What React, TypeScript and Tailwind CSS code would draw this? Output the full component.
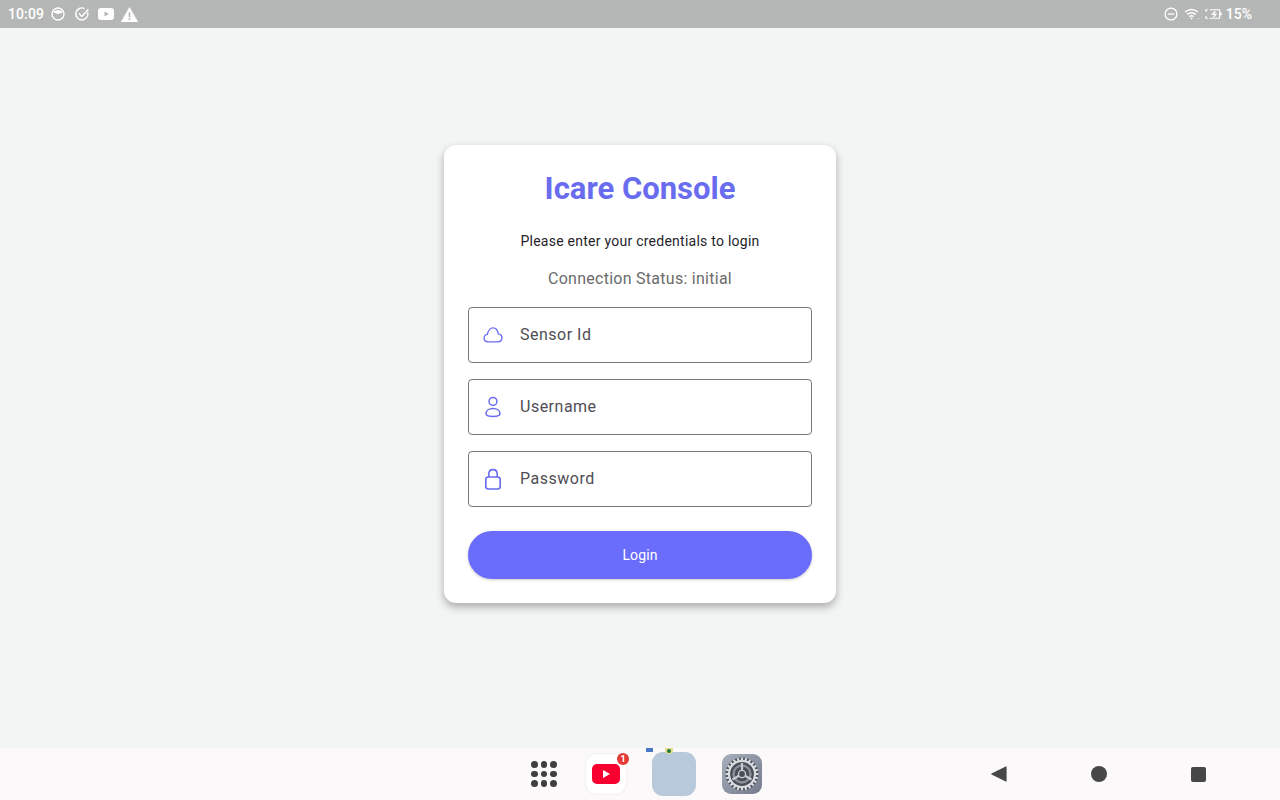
import type { ReactNode } from "react";

function StatusBar() {
  return (
    <div className="flex h-7 shrink-0 items-center justify-between bg-[#b5b7b6] pl-2 pr-7 text-white">
      <div className="flex items-center">
        <span className="text-[14px] font-medium leading-none tracking-[0.1px]">10:09</span>
        <svg viewBox="0 0 16 16" className="ml-[6px] h-4 w-4" fill="none" stroke="currentColor" strokeWidth="1.4">
          <circle cx="8" cy="8" r="6" />
          <path d="M3.5 5.5 Q8 2.5 12.5 5.5 Q12 8 10.5 7 L8 8.2 L5.5 7 Q4 8 3.5 5.5Z" fill="currentColor" stroke="none" />
        </svg>
        <svg viewBox="0 0 16 16" className="ml-[8px] h-4 w-4" fill="none" stroke="currentColor" strokeWidth="1.4">
          <path d="M13.6 6.2 A6 6 0 1 1 10.6 2.6" />
          <path d="M5 7.6 L7.8 10.4 L14.4 3.2" />
        </svg>
        <svg viewBox="0 0 16 12" className="ml-[8px] h-[12px] w-4">
          <rect width="16" height="12" rx="3" fill="currentColor" />
          <path d="M6.5 3.5 L11 6 L6.5 8.5Z" fill="#b5b7b6" />
        </svg>
        <svg viewBox="0 0 16 14" className="ml-[7px] h-[15px] w-[17px]">
          <path d="M8 0.5 L15.8 14 H0.2Z" fill="currentColor" stroke="currentColor" strokeWidth="0.6" strokeLinejoin="round" />
          <rect x="7.2" y="5" width="1.6" height="4.6" fill="#b5b7b6" />
          <rect x="7.2" y="10.6" width="1.6" height="1.6" fill="#b5b7b6" />
        </svg>
      </div>
      <div className="flex items-center">
        <svg viewBox="0 0 14 14" className="h-[14px] w-[14px]" fill="none" stroke="currentColor" strokeWidth="1.3">
          <circle cx="7" cy="7" r="5.9" />
          <path d="M3.8 7 H10.2" />
        </svg>
        <svg viewBox="0 0 16 12" className="ml-[6px] h-[12px] w-4" fill="none" stroke="currentColor" strokeWidth="1.5">
          <path d="M1 4 Q7.5 -1 14 4" />
          <path d="M3.2 6.4 Q7.5 3 11.8 6.4" />
          <path d="M5.4 8.6 Q7.5 7 9.6 8.6" />
          <circle cx="7.5" cy="10.4" r="0.9" fill="currentColor" stroke="none" />
          <circle cx="14.5" cy="10.6" r="0.6" fill="currentColor" stroke="none" />
        </svg>
        <svg viewBox="0 0 18 12" className="ml-[5px] h-[12px] w-[17px]" fill="none" stroke="currentColor" strokeWidth="1.2">
          <path d="M5 1.5 H15.5 V10.5 H5" />
          <path d="M3 1.5 H1 V4 M1 8 V10.5 H3" />
          <path d="M11 3 L8 6.2 H11.5 L9 9.2" strokeWidth="1.4" />
          <rect x="15.8" y="4.5" width="1.8" height="3" fill="currentColor" stroke="none" />
        </svg>
        <span className="ml-[4px] text-[14px] font-medium leading-none">15%</span>
      </div>
    </div>
  );
}

function CloudIcon() {
  return (
    <svg viewBox="0 0 22 20" className="h-5 w-5" fill="none" stroke="currentColor" strokeWidth="1.5" strokeLinejoin="round">
      <path d="M5.6 17.5 C3 17.5 1.2 15.7 1.2 13.4 C1.2 11.2 2.8 9.6 4.8 9.3 C5.5 5.8 7.9 2.2 11 2.2 C14 2.2 16.1 5 16.8 8.7 C19 8.9 20.8 10.8 20.8 13.1 C20.8 15.6 19 17.5 16.4 17.5Z" />
    </svg>
  );
}

function PersonIcon() {
  return (
    <svg viewBox="0 0 16 22" className="h-[22px] w-4" fill="none" stroke="currentColor" strokeWidth="1.5">
      <circle cx="8" cy="5.4" r="3.9" />
      <path d="M1 17.6 C1 14.4 4.2 12.4 8 12.4 C11.8 12.4 15 14.4 15 17.6 C15 20 13 20.6 8 20.6 C3 20.6 1 20 1 17.6Z" />
    </svg>
  );
}

function LockIcon() {
  return (
    <svg viewBox="0 0 18 22" className="h-[22px] w-[18px]" fill="none" stroke="currentColor" strokeWidth="1.6">
      <rect x="1.8" y="9" width="14.4" height="12" rx="2.5" />
      <path d="M4.8 9 V6 C4.8 3.4 6.6 1.6 9 1.6 C11.4 1.6 13.2 3.4 13.2 6 V9" />
    </svg>
  );
}

function Field({ icon, label }: { icon: ReactNode; label: string }) {
  return (
    <div className="flex h-14 items-center rounded border border-[#79747e] pl-3 text-[#504d55]">
      <span className="flex w-6 justify-center text-[#6a6cf0]">{icon}</span>
      <span className="ml-[15px] text-[16px] leading-6 tracking-[0.5px]">{label}</span>
    </div>
  );
}

function LoginCard() {
  return (
    <div className="flex w-[392px] flex-col rounded-xl bg-white p-6 shadow-[0_4px_8px_rgba(0,0,0,0.3)]">
      <h1 className="mt-px text-center text-[31px] font-bold leading-[38px] text-[#6a6cf0]">Icare Console</h1>
      <p className="mt-[23px] text-center text-[14px] leading-5 tracking-[0.25px] text-[#26242a]">
        Please enter your credentials to login
      </p>
      <p className="mt-4 text-center text-[16px] leading-6 tracking-[0.27px] text-[#6b6b6b]">
        Connection Status: initial
      </p>
      <div className="mt-4 flex flex-col gap-4">
        <Field icon={<CloudIcon />} label="Sensor Id" />
        <Field icon={<PersonIcon />} label="Username" />
        <Field icon={<LockIcon />} label="Password" />
      </div>
      <button className="mt-6 h-12 rounded-full bg-[#6a6cfb] text-[14px] tracking-[0.1px] text-white shadow-[0_1px_3px_rgba(0,0,0,0.22)]">
        Login
      </button>
    </div>
  );
}

function SettingsGlyph() {
  const teeth = Array.from({ length: 24 }, (_, i) => i * 15);
  return (
    <svg viewBox="0 0 40 40" className="h-10 w-10">
      <defs>
        <linearGradient id="gear-bg" x1="0" y1="0" x2="1" y2="1">
          <stop offset="0" stopColor="#a9b0bc" />
          <stop offset="1" stopColor="#727a8c" />
        </linearGradient>
      </defs>
      <rect width="40" height="40" rx="9" fill="url(#gear-bg)" />
      <circle cx="20" cy="20" r="16.5" fill="#4a4e57" />
      {teeth.map((a) => (
        <rect key={a} x="18.9" y="3.6" width="2.2" height="3.8" fill="#d9dce1" transform={`rotate(${a} 20 20)`} />
      ))}
      <circle cx="20" cy="20" r="13" fill="none" stroke="#d9dce1" strokeWidth="2.2" />
      <circle cx="20" cy="20" r="8.5" fill="none" stroke="#8a8f99" strokeWidth="2.4" />
      <path d="M20 20 V9 M20 20 L10.5 25.5 M20 20 L29.5 25.5" stroke="#c9ccd3" strokeWidth="2.2" />
      <circle cx="20" cy="20" r="3.6" fill="#4a4e57" stroke="#c9ccd3" strokeWidth="1.4" />
    </svg>
  );
}

function Dock() {
  return (
    <div className="flex h-[52px] shrink-0 items-center bg-[#fbf9fa] pl-[531px]">
      <div className="grid w-[26px] grid-cols-3 gap-[3px]">
        {Array.from({ length: 9 }, (_, i) => (
          <span key={i} className="aspect-square rounded-full bg-[#3f3f3f]" />
        ))}
      </div>
      <div className="relative ml-[29px] flex h-10 w-10 items-center justify-center rounded-[10px] bg-white shadow-[0_0_2px_rgba(0,0,0,0.12)]">
        <svg viewBox="0 0 28 20" className="h-[20px] w-[28px]">
          <rect width="28" height="20" rx="5" fill="#f8002f" />
          <path d="M11 6 L18 10 L11 14Z" fill="#fff" />
        </svg>
        <span className="absolute right-[-3px] top-[-1px] flex h-3 w-3 items-center justify-center rounded-full bg-[#e53935] text-[9px] font-bold leading-none text-white">
          1
        </span>
      </div>
      <div className="relative ml-[26px] h-11 w-11 rounded-[11px] bg-[#b9c9dc]">
        <span className="absolute left-[-6px] top-[-4px] h-[4px] w-[7px] bg-[#4a78c8]" />
        <span className="absolute left-[13px] top-[-4px] h-[6px] w-[8px] rounded-b-full bg-[#e9dc8c]" />
        <span className="absolute left-[15px] top-[-3px] h-1 w-1 rounded-full bg-[#1e7d3c]" />
      </div>
      <div className="ml-[26px] h-10 w-10">
        <SettingsGlyph />
      </div>
      <svg viewBox="0 0 16 16" className="ml-[229px] h-4 w-4">
        <path d="M15 1 V15 L0.8 8Z" fill="#474747" stroke="#474747" strokeWidth="1.2" strokeLinejoin="round" />
      </svg>
      <span className="ml-[84px] h-4 w-4 rounded-full bg-[#474747]" />
      <span className="ml-[84px] h-[15px] w-[15px] rounded-[2px] bg-[#474747]" />
    </div>
  );
}

export default function App() {
  return (
    <div className="flex h-[800px] w-[1280px] flex-col overflow-hidden bg-[#f3f5f4] font-['Roboto',sans-serif]">
      <StatusBar />
      <main className="flex flex-1 items-start justify-center pt-[117px]">
        <LoginCard />
      </main>
      <Dock />
    </div>
  );
}
